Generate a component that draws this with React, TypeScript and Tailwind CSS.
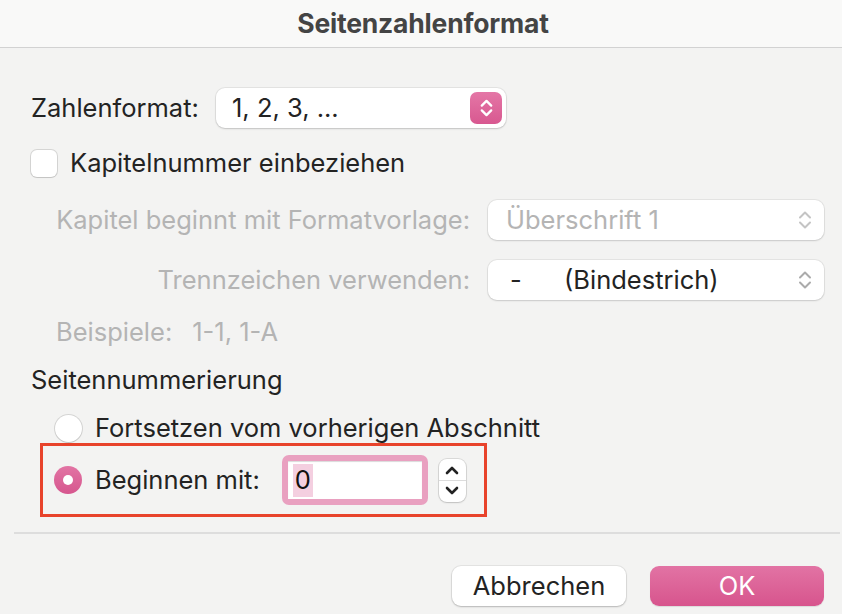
import React from "react";

const font = { fontFamily: "Inter, 'Noto Sans', sans-serif" };

function UpDown({ className = "", strokeWidth = 2 }: { className?: string; strokeWidth?: number }) {
  return (
    <svg viewBox="0 0 18 24" className={className} fill="none" stroke="currentColor" strokeWidth={strokeWidth} strokeLinecap="round" strokeLinejoin="round">
      <path d="M4 9.5 L9 4.5 L14 9.5" />
      <path d="M4 14.5 L9 19.5 L14 14.5" />
    </svg>
  );
}

function Select({ value, disabled }: { value: React.ReactNode; disabled?: boolean }) {
  return (
    <div className="w-[336px] h-[40px] rounded-[9px] bg-white shadow-[0_0_0_1px_rgba(0,0,0,0.06),0_1px_2px_rgba(0,0,0,0.12)] flex items-center justify-between pl-[18px] pr-[10px]">
      <span className={disabled ? "text-[#b4b4b4]" : "text-[#232323]"}>{value}</span>
      <UpDown className={`w-[18px] h-[24px] ${disabled ? "text-[#c4c4c4]" : "text-[#ababab]"}`} />
    </div>
  );
}

export default function App() {
  return (
    <div style={font} className="w-[842px] h-[614px] bg-[#f3f3f2] text-[25.5px] text-[#232323] flex flex-col overflow-hidden">
      {/* Title */}
      <div className="h-[48px] bg-[#f9f9f8] border-b border-[#d2d2d2] flex items-center justify-center">
        <span className="font-bold text-[26.5px] text-[#444] tracking-[-0.2px] ml-[4px]">Seitenzahlenformat</span>
      </div>

      {/* Zahlenformat */}
      <div className="mt-[40px] h-[40px] flex items-center pl-[31px]">
        <span className="w-[185px]">Zahlenformat:</span>
        <div className="w-[290px] h-[40px] rounded-[9px] bg-white shadow-[0_0_0_1px_rgba(0,0,0,0.06),0_1px_2px_rgba(0,0,0,0.15)] flex items-center justify-between pl-[16px] pr-[4px]">
          <span>1, 2, 3, ...</span>
          <div className="w-[32px] h-[32px] rounded-[7px] bg-gradient-to-b from-[#e476a6] to-[#d85890] flex items-center justify-center text-white">
            <UpDown className="w-[17px] h-[24px]" strokeWidth={2.4} />
          </div>
        </div>
      </div>

      {/* Checkbox */}
      <div className="mt-[22px] h-[27px] flex items-center pl-[31px]">
        <div className="w-[26px] h-[27px] rounded-[6px] bg-white shadow-[0_0_0_1px_rgba(0,0,0,0.12),0_1px_1px_rgba(0,0,0,0.08)]" />
        <span className="ml-[13px]">Kapitelnummer einbeziehen</span>
      </div>

      {/* Kapitel selects */}
      <div className="mt-[23px] h-[40px] flex items-center">
        <span className="w-[470px] text-right text-[#b4b4b4]">Kapitel beginnt mit Formatvorlage:</span>
        <div className="ml-[18px]">
          <Select value="Überschrift 1" disabled />
        </div>
      </div>
      <div className="mt-[20px] h-[40px] flex items-center">
        <span className="w-[470px] text-right text-[#b4b4b4]">Trennzeichen verwenden:</span>
        <div className="ml-[18px]">
          <Select
            value={
              <span className="flex">
                <span className="w-[58px] pl-[4px]">-</span>
                <span>(Bindestrich)</span>
              </span>
            }
          />
        </div>
      </div>

      <div className="mt-[16px] h-[32px] flex items-center pl-[56px] text-[#b4b4b4]">
        <span>Beispiele:</span>
        <span className="ml-[20px]">1-1, 1-A</span>
      </div>

      <div className="mt-[16px] h-[32px] flex items-center pl-[31px]">Seitennummerierung</div>

      {/* Radio 1 */}
      <div className="mt-[18px] h-[28px] flex items-center pl-[55px]">
        <div className="w-[27px] h-[27px] rounded-full bg-white shadow-[0_0_0_1px_rgba(0,0,0,0.12),0_1px_1px_rgba(0,0,0,0.08)]" />
        <span className="ml-[13px]">Fortsetzen vom vorherigen Abschnitt</span>
      </div>

      {/* Red box with radio 2 */}
      <div className="mt-[1px] ml-[40px] w-[447px] h-[74px] border-[3px] border-[#e8432b] flex items-center pl-[11px]">
        <div className="w-[28px] h-[28px] rounded-full bg-gradient-to-b from-[#e274a4] to-[#d6568e] flex items-center justify-center">
          <div className="w-[10px] h-[10px] rounded-full bg-white" />
        </div>
        <span className="ml-[13px]">Beginnen mit:</span>
        <div className="ml-[22px] w-[146px] h-[50px] rounded-[7px] bg-[#e9a0c0] p-[6px]">
          <div className="w-full h-full bg-white flex items-center pl-[5px] shadow-[inset_0_1px_1px_rgba(0,0,0,0.15)]">
            <span className="bg-[#f4cfe0] px-[2px] h-[33px] flex items-center text-[#111]">0</span>
          </div>
        </div>
        <div className="ml-[11px] w-[27px] h-[43px] rounded-[8px] bg-white shadow-[0_0_0_1px_rgba(0,0,0,0.1),0_1px_2px_rgba(0,0,0,0.12)] flex flex-col items-center text-[#222]">
          <svg viewBox="0 0 18 21" className="w-[18px] h-[21px]" fill="none" stroke="currentColor" strokeWidth="2.6" strokeLinecap="round" strokeLinejoin="round">
            <path d="M4 14 L9 9 L14 14" />
          </svg>
          <div className="w-full h-px bg-[#dcdcdc]" />
          <svg viewBox="0 0 18 21" className="w-[18px] h-[21px]" fill="none" stroke="currentColor" strokeWidth="2.6" strokeLinecap="round" strokeLinejoin="round">
            <path d="M4 7 L9 12 L14 7" />
          </svg>
        </div>
      </div>

      {/* Separator */}
      <div className="mt-[15px] ml-[14px] mr-[2px] h-[2px] bg-[#dddddd]" />

      {/* Buttons */}
      <div className="mt-[32px] flex justify-end pr-[18px] gap-[24px]">
        <button className="w-[174px] h-[40px] rounded-[9px] bg-white shadow-[0_0_0_1px_rgba(0,0,0,0.06),0_1px_2px_rgba(0,0,0,0.2)] text-[#232323]">
          Abbrechen
        </button>
        <button className="w-[174px] h-[40px] rounded-[9px] bg-gradient-to-b from-[#e273a4] to-[#d7548d] text-white shadow-[0_1px_1px_rgba(0,0,0,0.1)]">
          OK
        </button>
      </div>
    </div>
  );
}
